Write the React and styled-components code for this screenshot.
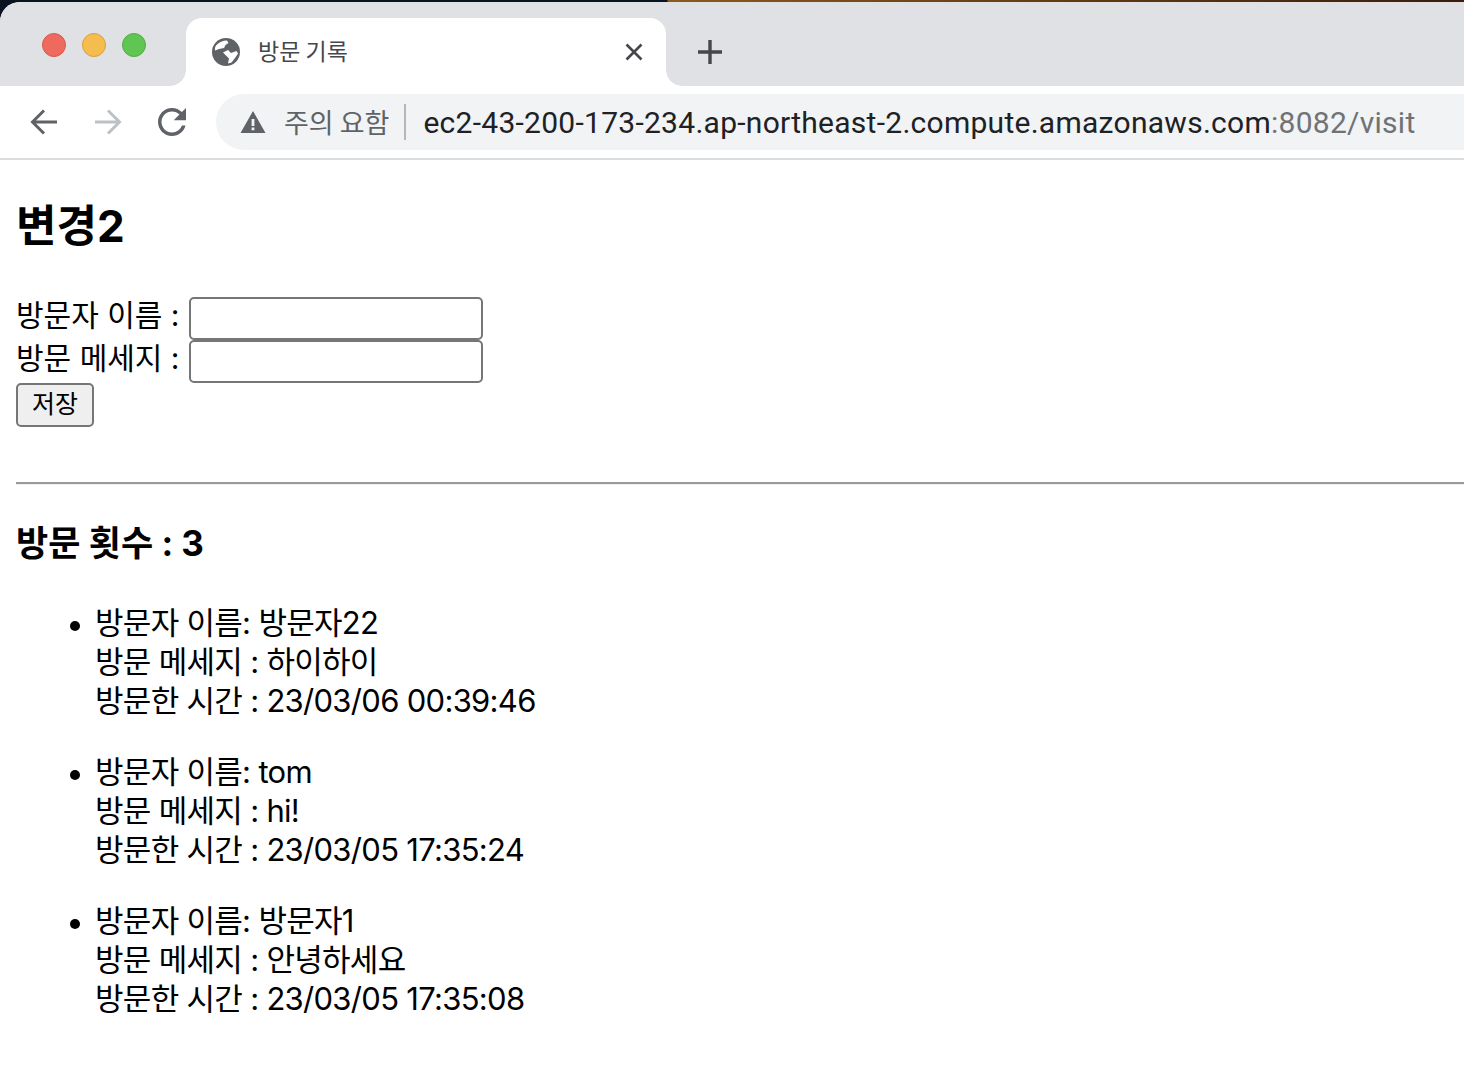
import React from 'react'
import styled, { createGlobalStyle } from 'styled-components'

const visits = [
    { name: '방문자22', message: '하이하이', time: '23/03/06 00:39:46' },
    { name: 'tom', message: 'hi!', time: '23/03/05 17:35:24' },
    { name: '방문자1', message: '안녕하세요', time: '23/03/05 17:35:08' },
]

const GlobalStyle = createGlobalStyle`
    html, body {
        margin: 0;
        padding: 0;
        background: #fff;
    }
    body {
        font-family: "Inter", "Noto Sans CJK KR", sans-serif;
        color: #000;
    }
`

const Frame = styled.div`
    width: 1464px;
    height: 1088px;
    overflow: hidden;
    background: linear-gradient(90deg, #0a1420 0, #0a1420 667px, #8a5a1e 668px, #3a1c0a 1464px);
    padding-top: 2px;
    box-sizing: border-box;
`

const Window = styled.div`
    background: #fff;
    height: 1086px;
    border-radius: 20px 0 0 0;
    overflow: hidden;
`

const TabStrip = styled.div`
    height: 84px;
    background: #dfe1e5;
    display: flex;
    align-items: flex-end;
`

const TrafficLights = styled.div`
    width: 186px;
    height: 84px;
    flex: none;
    display: flex;
    gap: 16px;
    padding: 31px 0 0 42px;
    box-sizing: border-box;
`

const Light = styled.span`
    width: 24px;
    height: 24px;
    border-radius: 50%;
    box-sizing: border-box;
    background: ${p => p.$color};
    border: 1px solid ${p => p.$edge};
`

const Tab = styled.div`
    position: relative;
    width: 480px;
    height: 68px;
    background: #fff;
    border-radius: 16px 16px 0 0;
    display: flex;
    align-items: center;
    padding: 0 22px 0 25px;
    box-sizing: border-box;

    &::before, &::after {
        content: '';
        position: absolute;
        bottom: 0;
        width: 16px;
        height: 16px;
    }
    &::before {
        left: -16px;
        background: radial-gradient(circle at 0 0, transparent 15.5px, #fff 16px);
    }
    &::after {
        right: -16px;
        background: radial-gradient(circle at 100% 0, transparent 15.5px, #fff 16px);
    }
`

const TabTitle = styled.span`
    margin-left: 17px;
    font-family: "Noto Sans CJK KR", sans-serif;
    font-size: 23px;
    line-height: 30px;
    color: #45474a;
    flex: 1;
    position: relative;
    top: -2px;
`

const NewTab = styled.div`
    margin-left: 31px;
    height: 68px;
    display: flex;
    align-items: center;
`

const Toolbar = styled.div`
    height: 74px;
    box-sizing: border-box;
    border-bottom: 2px solid #dadce0;
    padding: 8px 0 8px 28px;
    display: flex;
    align-items: flex-start;
`

const NavButton = styled.div`
    width: 32px;
    height: 56px;
    margin-right: 32px;
    display: flex;
    align-items: center;
    justify-content: center;
    flex: none;
    &:last-of-type {
        margin-right: 28px;
    }
`

const Omnibox = styled.div`
    flex: 1;
    height: 56px;
    margin-left: -4px;
    background: #f1f3f4;
    border-radius: 28px 0 0 28px;
    display: flex;
    align-items: center;
    padding-left: 24px;
    white-space: nowrap;
`

const WarningLabel = styled.span`
    margin-left: 18px;
    font-family: "Noto Sans CJK KR", sans-serif;
    font-size: 27px;
    color: #5f6368;
    line-height: 36px;
    padding-right: 15px;
    border-right: 2px solid #b5b7ba;
`

const Url = styled.span`
    margin-left: 17px;
    font-family: "Roboto", "Noto Sans", sans-serif;
    font-size: 30px;
    letter-spacing: 0.27px;
    color: #202124;
`

const UrlRest = styled.span`
    color: #6f7276;
`

const Page = styled.main`
    padding: 38px 0 0 16px;
`

const Title = styled.h1`
    margin: 0 0 43px;
    font-size: 44px;
    line-height: 56px;
    font-weight: 700;
`

const FormRow = styled.div`
    display: flex;
    align-items: flex-start;
    height: 43px;
`

const Label = styled.label`
    font-size: 30px;
    line-height: 36px;
    margin-right: 9px;
`

const TextInput = styled.input`
    width: 294px;
    height: 43px;
    margin: 0;
    padding: 0;
    box-sizing: border-box;
    background: #fff;
    border: 2px solid #767676;
    border-radius: 5px;
`

const SaveButton = styled.button`
    display: block;
    width: 78px;
    height: 44px;
    padding: 0 0 6px;
    margin: 0;
    box-sizing: border-box;
    background: #efefef;
    border: 2px solid #767676;
    border-radius: 5px;
    font-family: "Noto Sans CJK KR", sans-serif;
    font-size: 25px;
    line-height: 32px;
    color: #000;
`

const Divider = styled.hr`
    margin: 55px 0 0;
    border: 0;
    border-top: 2px solid #9a9a9a;
    border-bottom: 1px solid #eee;
`

const CountTitle = styled.h3`
    margin: 35px 0 0;
    font-size: 35px;
    line-height: 46px;
    font-weight: 700;
`

const VisitList = styled.ul`
    margin: 37px 0 0;
    padding: 0 0 0 79px;
    list-style: none;
`

const VisitItem = styled.li`
    position: relative;
    font-size: 31px;
    letter-spacing: -0.7px;
    line-height: 39px;
    margin-bottom: 32px;

    &::before {
        content: '';
        position: absolute;
        left: -25px;
        top: 18px;
        width: 10px;
        height: 10px;
        border-radius: 50%;
        background: #000;
    }
`

const VisitLine = styled.div`
    white-space: nowrap;
`

const GlobeIcon = () => (
    <svg width="30" height="30" viewBox="0 0 30 30">
        <circle cx="15" cy="15" r="14" fill="#5f6368" />
        <path fill="#fff" d="M5 8.500C8 5 12 3.500 16 3.500L17.500 6 14.500 8 13 11 8 12 4 13.500C3.800 11.500 4 10 5 8.500Z" />
        <path fill="#fff" d="M12 15.500 17 13 20 16 25.500 14 27 16.500 24 21 20.500 25.500 17 26.500 18 21.500 15 18.500Z" />
    </svg>
)

const BackArrow = ({ color }) => (
    <svg width="32" height="32" viewBox="0 0 32 32" fill="none" stroke={color} strokeWidth="3">
        <path d="M29 16H5M16 4.500 4.500 16 16 27.500" />
    </svg>
)

const ForwardArrow = ({ color }) => (
    <svg width="32" height="32" viewBox="0 0 32 32" fill="none" stroke={color} strokeWidth="3">
        <path d="M3 16H27M16 4.500 27.500 16 16 27.500" />
    </svg>
)

const ReloadIcon = () => (
    <svg width="42" height="42" viewBox="0 0 24 24" fill="#5f6368" style={{ flex: 'none' }}>
        <path d="M17.65 6.35C16.2 4.9 14.21 4 12 4c-4.42 0-7.99 3.58-7.99 8s3.57 8 7.99 8c3.730 0 6.840-2.550 7.730-6h-2.080c-.82 2.330-3.040 4-5.650 4-3.310 0-6-2.690-6-6s2.690-6 6-6c1.660 0 3.140.69 4.220 1.780L13 11h7V4l-2.350 2.350z" />
    </svg>
)

const WarningIcon = () => (
    <svg width="26" height="24" viewBox="0 0 26 24" fill="#5f6368">
        <path fillRule="evenodd" d="M13 1 25.500 23H.5L13 1ZM11.600 9v7h2.800V9h-2.800Zm0 8.500v2.800h2.800v-2.800h-2.800Z" />
    </svg>
)

const CloseIcon = () => (
    <svg width="20" height="20" viewBox="0 0 20 20" fill="none" stroke="#45474a" strokeWidth="2.600">
        <path d="M2.500 2.500 17.500 17.500M17.500 2.500 2.500 17.500" />
    </svg>
)

const PlusIcon = () => (
    <svg width="26" height="26" viewBox="0 0 26 26" fill="none" stroke="#45474a" strokeWidth="3.400">
        <path d="M13 1V25M1 13H25" />
    </svg>
)

const App = () => {
    return (
        <Frame>
            <GlobalStyle />
            <Window>
                <TabStrip>
                    <TrafficLights>
                        <Light $color="#ee6a5f" $edge="#d9574e" />
                        <Light $color="#f5bd4f" $edge="#d9a03a" />
                        <Light $color="#61c554" $edge="#4fae45" />
                    </TrafficLights>
                    <Tab>
                        <GlobeIcon />
                        <TabTitle>방문 기록</TabTitle>
                        <CloseIcon />
                    </Tab>
                    <NewTab>
                        <PlusIcon />
                    </NewTab>
                </TabStrip>
                <Toolbar>
                    <NavButton><BackArrow color="#5f6368" /></NavButton>
                    <NavButton><ForwardArrow color="#bdc1c6" /></NavButton>
                    <NavButton><ReloadIcon /></NavButton>
                    <Omnibox>
                        <WarningIcon />
                        <WarningLabel>주의 요함</WarningLabel>
                        <Url>
                            ec2-43-200-173-234.ap-northeast-2.compute.amazonaws.com
                            <UrlRest>:8082/visit</UrlRest>
                        </Url>
                    </Omnibox>
                </Toolbar>
                <Page>
                    <Title>변경2</Title>
                    <FormRow>
                        <Label>방문자 이름 :</Label>
                        <TextInput />
                    </FormRow>
                    <FormRow>
                        <Label>방문 메세지 :</Label>
                        <TextInput />
                    </FormRow>
                    <SaveButton>저장</SaveButton>
                    <Divider />
                    <CountTitle>방문 횟수 : 3</CountTitle>
                    <VisitList>
                        {visits.map((visit, index) => (
                            <VisitItem key={index}>
                                <VisitLine>방문자 이름: {visit.name}</VisitLine>
                                <VisitLine>방문 메세지 : {visit.message}</VisitLine>
                                <VisitLine>방문한 시간 : {visit.time}</VisitLine>
                            </VisitItem>
                        ))}
                    </VisitList>
                </Page>
            </Window>
        </Frame>
    )
}

export default App
